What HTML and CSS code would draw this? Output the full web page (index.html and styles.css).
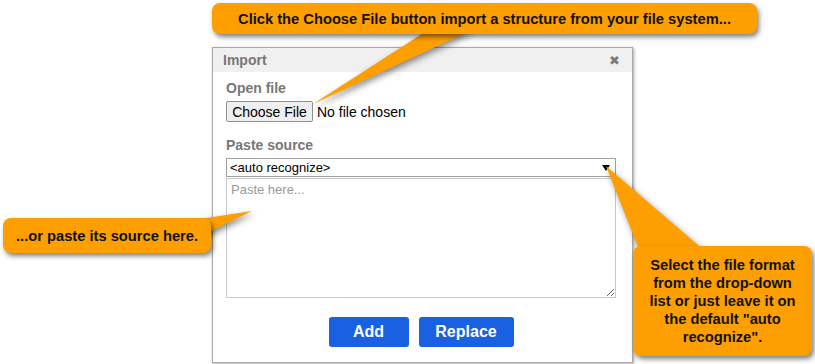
FILE: index.html
```html
<!DOCTYPE html>
<html lang="en">
<head>
  <meta charset="UTF-8">
  <title>Import</title>
  <link rel="stylesheet" href="styles.css">
</head>
<body>
  <div class="dialog">
    <div class="dialog-head">
      <span class="dialog-title">Import</span>
      <span class="dialog-close">&#x2716;</span>
    </div>
    <div class="dialog-body">
      <div class="label">Open file</div>
      <div class="file-row">
        <button class="file-btn" type="button">Choose File</button>
        <span class="file-name">No file chosen</span>
      </div>

      <div class="label label-paste">Paste source</div>
      <div class="select-wrap">
        <select class="format">
          <option>&lt;auto recognize&gt;</option>
        </select>
      </div>
      <textarea class="source" placeholder="Paste here..."></textarea>

      <div class="actions">
        <button class="btn btn-add" type="button">Add</button>
        <button class="btn btn-replace" type="button">Replace</button>
      </div>
    </div>
  </div>

  <!-- callout tails -->
  <svg class="tails" width="815" height="364" viewBox="0 0 815 364">
    <polygon points="428,30 472,30 313,104" />
    <polygon points="200,219 252,211 205,234" />
    <polygon points="606,166 640,252 706,252" />
  </svg>

  <div class="callout callout-top">Click the Choose File button import a structure from your file system...</div>
  <div class="callout callout-left">...or paste its source here.</div>
  <div class="callout callout-right">Select the file format from the drop-down list or just leave it on the default "auto recognize".</div>
</body>
</html>
```

FILE: styles.css
```css
body {
  margin: 0;
  background: #fff;
  font-family: "Liberation Sans", Arial, sans-serif;
  width: 815px;
  height: 364px;
  overflow: hidden;
  position: relative;
}
/* Dialogo */
.dialog {
  box-sizing: border-box;
  width: 421px;
  margin: 47px 0 0 212px;
  border: 1px solid #a9a9a9;
  box-shadow: 1px 1px 3px rgba(0,0,0,0.35);
  background: #fff;
}
.dialog-head {
  height: 24px;
  background: #f0f0f0;
  display: flex;
  justify-content: space-between;
  align-items: center;
  padding: 0 12px 0 10px;
}
.dialog-title {
  font-size: 14px;
  font-weight: bold;
  color: #777;
}
.dialog-close {
  font-size: 13px;
  line-height: 1;
  color: #7a7a7a;
  font-family: "DejaVu Sans", sans-serif;
}
.dialog-body {
  padding: 0 16px 15px 13px;
}
.label {
  font-size: 14px;
  line-height: 18px;
  font-weight: bold;
  color: #777;
  margin-top: 7px;
}
.label-paste {
  margin-top: 14px;
}
.file-row {
  display: flex;
  align-items: center;
  margin-top: 4px;
}
.file-btn {
  box-sizing: border-box;
  height: 21px;
  width: 87px;
  padding: 0;
  font-family: "Liberation Sans", Arial, sans-serif;
  font-size: 14px;
  color: #000;
  background: #efefef;
  border: 1px solid #8f8f8f;
  border-radius: 2px;
}
.file-name {
  font-size: 14px;
  color: #000;
  margin-left: 4px;
}
.select-wrap {
  position: relative;
  margin-top: 4px;
}
.select-wrap::after {
  content: "";
  position: absolute;
  right: 6px;
  top: 7px;
  border-left: 4px solid transparent;
  border-right: 4px solid transparent;
  border-top: 6px solid #000;
}
.format {
  appearance: none;
  -webkit-appearance: none;
  display: block;
  box-sizing: border-box;
  width: 390px;
  height: 19px;
  padding: 0 3px;
  border: 1px solid #a0a0a0;
  border-radius: 0;
  background: #fff;
  font-family: "Liberation Sans", Arial, sans-serif;
  font-size: 13px;
  color: #000;
}
.source {
  display: block;
  box-sizing: border-box;
  width: 390px;
  height: 120px;
  margin: 1px 0 0 0;
  padding: 3px 4px;
  border: 1px solid #c8c8c8;
  font-family: "Liberation Sans", Arial, sans-serif;
  font-size: 13px;
}
.source::placeholder {
  color: #999;
}
.actions {
  display: flex;
  justify-content: center;
  gap: 10px;
  margin-top: 19px;
}
.btn {
  height: 30px;
  border: none;
  border-radius: 3px;
  background: #1a60e3;
  color: #fff;
  font-family: "Liberation Sans", Arial, sans-serif;
  font-size: 16px;
  font-weight: bold;
}
.btn-add {
  width: 80px;
}
.btn-replace {
  width: 95px;
}
/* Globos de ayuda */
.tails {
  position: absolute;
  left: 0;
  top: 0;
  filter: drop-shadow(2px 3px 3px rgba(0,0,0,0.45));
}
.tails polygon {
  fill: #fd9f00;
}
.callout {
  position: absolute;
  box-sizing: border-box;
  background: #fd9f00;
  border-radius: 8px;
  box-shadow: 2px 3px 5px rgba(0,0,0,0.5);
  color: #111;
  font-family: "Liberation Sans", Arial, sans-serif;
  font-size: 14.7px;
  font-weight: bold;
  text-align: center;
  display: flex;
  align-items: center;
  justify-content: center;
}
.callout-top {
  left: 212px;
  top: 3px;
  width: 545px;
  height: 31px;
}
.callout-left {
  left: 3px;
  top: 218px;
  width: 208px;
  height: 35px;
}
.callout-right {
  left: 633px;
  top: 246px;
  width: 179px;
  height: 110px;
  padding: 0 14px;
  line-height: 18px;
}
```
